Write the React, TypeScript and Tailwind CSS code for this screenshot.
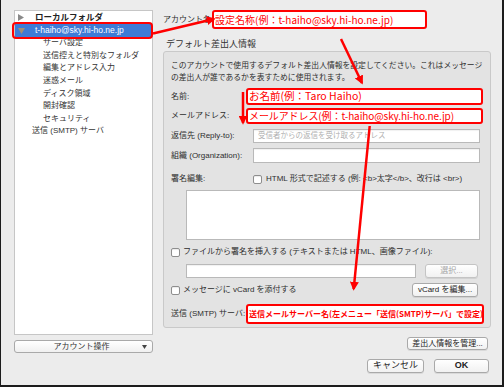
import React from 'react';

const RED = '#ff0000';

const Checkbox: React.FC = () => (
  <span className="inline-block w-[9px] h-[9px] shrink-0 rounded-[2px] border border-[#8e8e8e] bg-white shadow-[inset_0_1px_1px_rgba(0,0,0,0.08)]" />
);

const MacButton: React.FC<{ label: string; className?: string; disabled?: boolean }> = ({ label, className = '', disabled }) => (
  <div
    className={`flex items-center justify-center rounded-[3px] border border-[#a9a9a9] bg-gradient-to-b from-white to-[#f1f1f1] shadow-[0_1px_0_rgba(0,0,0,0.08)] text-[8px] ${
      disabled ? 'text-[#a8a8a8] border-[#c4c4c4]' : 'text-[#222]'
    } ${className}`}
  >
    {label}
  </div>
);

const RedBox: React.FC<{ children: React.ReactNode; className?: string }> = ({ children, className = '' }) => (
  <div
    className={`flex items-center rounded-[3px] border-2 border-[#ff0000] bg-white pl-[1px] font-['Noto_Sans_CJK_JP',sans-serif] text-[#ff0000] leading-none whitespace-nowrap ${className}`}
  >
    {children}
  </div>
);

const TextField: React.FC<{ placeholder?: string; className?: string }> = ({ placeholder, className = '' }) => (
  <div className={`flex items-center border border-[#b9b9b9] bg-white pl-[4px] text-[7.5px] text-[#b0b0b0] shadow-[inset_0_1px_1px_rgba(0,0,0,0.06)] ${className}`}>
    {placeholder}
  </div>
);

const subItems = ['サーバ設定', '送信控えと特別なフォルダ', '編集とアドレス入力', '迷惑メール', 'ディスク領域', '開封確認', 'セキュリティ'];

export default function App() {
  return (
    <div className="relative w-[504px] h-[387px] overflow-hidden bg-[#ececec] border-l border-r-2 border-b-2 border-[#1c1c1c] font-['Liberation_Sans','Noto_Sans_CJK_JP',sans-serif] text-[#2e2e2e]">
      <div className="flex pt-[10px] pl-[13px]">
        {/* account tree */}
        <div className="flex flex-col w-[139px]">
          <div className="h-[325px] border border-[#c6c6c6] bg-white text-[8px]">
            <div className="flex items-center h-[13px] pl-[3px]">
              <svg width="6" height="7" viewBox="0 0 6 7" className="mr-[11px]">
                <polygon points="0,0 6,3.5 0,7" fill="#8a8a8a" />
              </svg>
              <span className="font-bold text-[8.5px] text-[#222]">ローカルフォルダ</span>
            </div>
            <div className="relative flex items-center h-[13px] pl-[3px] bg-[#3e7bd6] text-white">
              <svg width="7" height="6" viewBox="0 0 7 6" className="mr-[10px]">
                <polygon points="0,0 7,0 3.5,6" fill="#a18f76" />
              </svg>
              <span className="text-[8.5px]">t-haiho@sky.hi-ho.ne.jp</span>
              <div className="absolute -left-[3px] -right-[1px] -top-[2px] -bottom-[2px] rounded-[4px] border-2 border-[#ff0000]" />
            </div>
            {subItems.map((s) => (
              <div key={s} className="flex items-center h-[12.6px] pl-[28px] text-[#333]">
                {s}
              </div>
            ))}
            <div className="flex items-center h-[12.6px] pl-[17px] text-[#333]">送信 (SMTP) サーバ</div>
          </div>
          <div className="mt-[5px] flex items-center h-[13px] rounded-[3px] border border-[#a9a9a9] bg-gradient-to-b from-white to-[#f0f0f0] text-[8px] text-[#333]">
            <span className="flex-1 text-center pl-[6px]">アカウント操作</span>
            <svg width="5" height="4" viewBox="0 0 5 4" className="mr-[5px]">
              <polygon points="0,0 5,0 2.5,4" fill="#444" />
            </svg>
          </div>
        </div>

        {/* settings */}
        <div className="ml-[10px] w-[328px] flex flex-col">
          <div className="flex items-center h-[19px]">
            <span className="w-[49px] text-[8px] whitespace-nowrap overflow-hidden">アカウント名:</span>
            <RedBox className="w-[215px] h-[19px] text-[10px]">設定名称(例：t-haiho@sky.hi-ho.ne.jp)</RedBox>
          </div>

          <div className="mt-[9px] h-[13px] pl-[3px] flex items-center text-[9px] text-[#333]">デフォルト差出人情報</div>

          <div className="h-[277px] rounded-[3px] border border-[#c9c9c9] bg-[#e3e3e3] pl-[7px] flex flex-col text-[8px]">
            <div className="pt-[8px] leading-[12px] text-[7.8px] whitespace-nowrap">
              このアカウントで使用するデフォルト差出人情報を設定してください。これはメッセージ
              <br />
              の差出人が誰であるかを表すために使用されます。
            </div>

            <div className="mt-[4px] flex items-center h-[17px]">
              <span className="w-[75px]">名前:</span>
              <RedBox className="w-[237px] h-[17px] text-[10.5px]">お名前(例：Taro Haiho)</RedBox>
            </div>
            <div className="mt-[3px] flex items-center h-[16px]">
              <span className="w-[75px]">メールアドレス:</span>
              <RedBox className="w-[237px] h-[16px] text-[10px] tracking-[-0.1px]">メールアドレス(例：t-haiho@sky.hi-ho.ne.jp)</RedBox>
            </div>

            <div className="mt-[5px] flex items-center h-[14px]">
              <span className="w-[82px]">返信先 (Reply-to):</span>
              <TextField className="w-[227px] h-[14px]" placeholder="受信者からの返信を受け取るアドレス" />
            </div>
            <div className="mt-[5px] flex items-center h-[15px]">
              <span className="w-[82px]">組織 (Organization):</span>
              <TextField className="w-[227px] h-[15px]" />
            </div>

            <div className="mt-[10px] flex items-center h-[12px]">
              <span className="w-[82px]">署名編集:</span>
              <Checkbox />
              <span className="ml-[4px] whitespace-nowrap">HTML 形式で記述する (例: &lt;b&gt;太字&lt;/b&gt;、改行は &lt;br&gt;)</span>
            </div>
            <div className="mt-[5px] ml-[15px] w-[294px] h-[50px] border border-[#b9b9b9] bg-white" />

            <div className="mt-[6px] flex items-center h-[12px]">
              <Checkbox />
              <span className="ml-[3px] whitespace-nowrap">ファイルから署名を挿入する (テキストまたは HTML、画像ファイル):</span>
            </div>
            <div className="mt-[6px] ml-[15px] flex items-center h-[14px]">
              <TextField className="w-[230px] h-[14px]" />
              <MacButton label="選択..." disabled className="ml-[9px] w-[53px] h-[14px]" />
            </div>

            <div className="mt-[5px] flex items-center h-[14px]">
              <Checkbox />
              <span className="ml-[3px]">メッセージに vCard を添付する</span>
              <MacButton label="vCard を編集..." className="ml-auto mr-[12px] w-[66px] h-[14px]" />
            </div>

            <div className="mt-[7px] flex items-center h-[20px]">
              <span className="w-[75px]">送信 (SMTP) サーバ:</span>
              <RedBox className="w-[238px] h-[20px] text-[8px] font-bold">送信メールサーバー名(左メニュー「送信(SMTP)サーバ」で設定)</RedBox>
            </div>
          </div>

          <div className="mt-[9px] flex justify-end pr-[3px]">
            <MacButton label="差出人情報を管理..." className="w-[81px] h-[13px]" />
          </div>
          <div className="mt-[9px] flex justify-end pr-[2px] gap-[10px]">
            <MacButton label="キャンセル" className="w-[57px] h-[14px] text-[9px]" />
            <MacButton label="OK" className="w-[55px] h-[14px] text-[9px] font-bold" />
          </div>
        </div>
      </div>

      {/* annotation arrows */}
      <svg className="absolute inset-0 pointer-events-none" width="504" height="387" viewBox="0 0 504 387">
        <defs>
          <marker id="ah" viewBox="0 0 10 10" refX="8" refY="5" markerWidth="3.6" markerHeight="3.6" orient="auto">
            <path d="M0,0 L10,5 L0,10 z" fill={RED} />
          </marker>
        </defs>
        <g stroke={RED} strokeWidth="2.5" fill="none" markerEnd="url(#ah)">
          <line x1="152" y1="33.5" x2="213" y2="19" />
          <line x1="340" y1="39" x2="361" y2="83" />
          <line x1="242" y1="92" x2="242" y2="123" />
          <line x1="368.7" y1="126" x2="352.7" y2="289" />
        </g>
      </svg>
    </div>
  );
}
